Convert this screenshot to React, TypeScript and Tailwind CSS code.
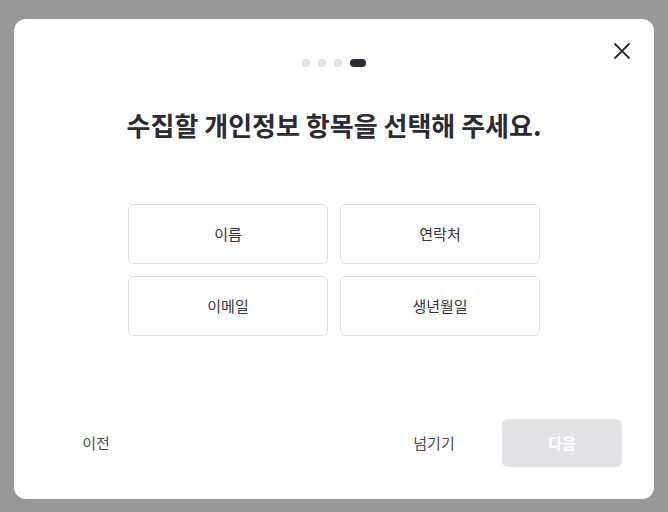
import React from "react";

const font = { fontFamily: '"Noto Sans CJK KR", "Noto Sans", sans-serif' };

export default function App() {
  const items = ["이름", "연락처", "이메일", "생년월일"];
  return (
    <div className="w-[668px] h-[512px] bg-[#989898] pt-[19px]" style={font}>
      <div className="mx-auto w-[640px] h-[480px] bg-white rounded-[12px] relative flex flex-col">
        <button className="absolute right-[20px] top-[20px] w-[24px] h-[24px] flex items-center justify-center text-[#2b2b33]">
          <svg width="18" height="18" viewBox="0 0 18 18" fill="none" stroke="currentColor" strokeWidth="1.8" strokeLinecap="round">
            <path d="M2 2 L16 16 M16 2 L2 16" />
          </svg>
        </button>
        <div className="flex justify-center gap-[8px] mt-[40px]">
          <span className="w-[8px] h-[8px] rounded-full bg-[#e2e2e4]" />
          <span className="w-[8px] h-[8px] rounded-full bg-[#e2e2e4]" />
          <span className="w-[8px] h-[8px] rounded-full bg-[#e2e2e4]" />
          <span className="w-[16px] h-[8px] rounded-full bg-[#2b2b33]" />
        </div>
        <h1 className="mt-[40px] text-center text-[26px] leading-[36px] font-bold text-[#2b2b33]">
          수집할 개인정보 항목을 선택해 주세요.
        </h1>
        <div className="mt-[61px] mx-auto grid grid-cols-[200px_200px] gap-[12px]">
          {items.map((t) => (
            <button
              key={t}
              className="h-[60px] rounded-[6px] border border-[#e0e0e2] bg-white text-[15px] text-[#333338] flex items-center justify-center"
            >
              {t}
            </button>
          ))}
        </div>
        <div className="mt-auto mb-[32px] px-[32px] flex items-center">
          <button className="w-[100px] h-[48px] text-[15px] text-[#4a4a52] flex items-center justify-center">이전</button>
          <div className="flex-1" />
          <button className="w-[120px] h-[48px] text-[15px] text-[#4a4a52] flex items-center justify-center">넘기기</button>
          <button className="ml-[8px] w-[120px] h-[48px] rounded-[6px] bg-[#e2e2e4] text-white text-[15px] font-bold flex items-center justify-center">
            다음
          </button>
        </div>
      </div>
    </div>
  );
}
